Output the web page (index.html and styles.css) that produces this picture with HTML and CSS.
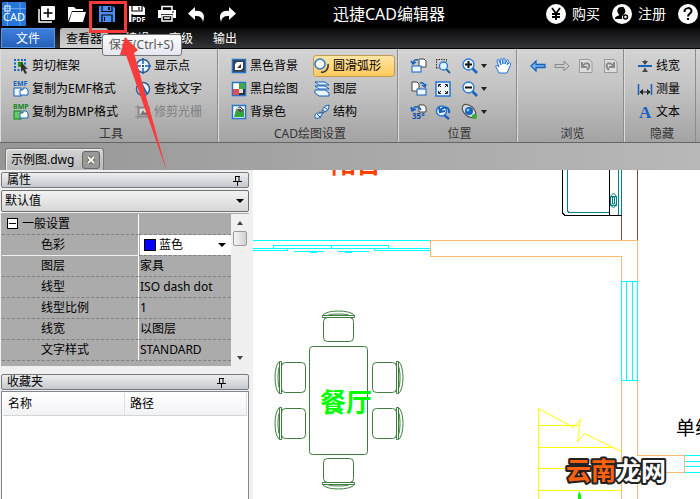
FILE: index.html
```
<!DOCTYPE html>
<html lang="zh-CN">
<head>
  <meta charset="UTF-8" />
  <meta name="viewport" content="width=device-width, initial-scale=1.0"/>
  <title>迅捷CAD编辑器</title>
  <link rel="stylesheet" href="styles.css">
</head>
<body>
  <header class="titlebar">
    <div class="quick">
      <svg class="logo" viewBox="0 0 24 24"><rect width="24" height="24" rx="1" fill="#2675d8"/><path d="M0 6.500H24M5.500 0V24M18 0V24" stroke="#69a5ed" fill="none"/><rect x="3" y="4" width="5" height="5" fill="none" stroke="#fff"/><text x="1" y="19" class="logo-text">CAD</text></svg>
      <button class="quick-btn" aria-label="新建"><svg viewBox="0 0 18 18"><path d="M1 4V17H14" fill="none" stroke="#fff" stroke-width="1.500"/><rect x="3" y="1" width="14" height="14" rx="1" fill="#fff"/><path d="M10 3.500V12.500M5.500 8H14.500" stroke="#000" stroke-width="1.500"/></svg></button>
      <button class="quick-btn" aria-label="打开"><svg viewBox="0 0 18 18"><path d="M0 16V2H6L8 4H15V6H4L1 14Z" fill="#fff"/><path d="M4 7H18L15 17H1Z" fill="#fff"/></svg></button>
      <button class="quick-btn" aria-label="保存"><svg viewBox="0 0 18 18"><path d="M1 1H15L17 3V17H1Z" fill="#4b8cf7"/><path d="M4 1V6.500H14V1M4 17V10H14V17" fill="none" stroke="#000" stroke-width="1.200"/><path d="M10 2H12V5H10ZM6 12H7V16H6Z" fill="#000"/></svg></button>
      <button class="quick-btn" aria-label="导出PDF"><svg viewBox="0 0 18 18"><path d="M1 1H15L17 3V17H1Z" fill="#fff"/><path d="M4 1V6H14V1M11 2V5M4 17V9" fill="none" stroke="#000" stroke-width="1.200"/><rect x="4" y="10" width="14" height="8" fill="#000"/><text x="4" y="17" class="pdf-text">PDF</text></svg></button>
      <button class="quick-btn" aria-label="打印"><svg viewBox="0 0 18 18"><path d="M4 5V1.500H14V5" fill="none" stroke="#fff" stroke-width="1.600"/><path d="M0 5H18V13H15V9H3V13H0Z" fill="#fff"/><path d="M4 10.500H14V16H4ZM6 13H12" fill="none" stroke="#fff" stroke-width="1.500"/><path d="M14 7H16" stroke="#000"/></svg></button>
      <button class="quick-btn" aria-label="撤销"><svg viewBox="0 0 18 18"><path d="M7 2V6C14 5 18 9 15 17C14 12 12 11 7 11V15L0 8.500Z" fill="#fff"/></svg></button>
      <button class="quick-btn" aria-label="重做"><svg viewBox="0 0 18 18"><path d="M11 2V6C4 5 0 9 3 17C4 12 6 11 11 11V15L18 8.500Z" fill="#fff"/></svg></button>
    </div>
    <h1 class="app-title">迅捷CAD编辑器</h1>
    <div class="account">
      <button class="account-btn"><svg viewBox="0 0 20 20"><circle cx="10" cy="10" r="10" fill="#fff"/><path d="M6 4L10 9.500L14 4M10 9V16M6 10H14M6 13H14" fill="none" stroke="#000" stroke-width="1.800"/></svg>购买</button>
      <button class="account-btn"><svg viewBox="0 0 20 20"><circle cx="10" cy="10" r="10" fill="#fff"/><path d="M9 3A3.500 4 0 0 1 12 10C12 11 11 11 10 12V15H3C3 12 6 12 7.500 11C4 8 5 3 9 3Z" fill="#000"/><circle cx="13.500" cy="13" r="2" fill="#fff" stroke="#000" stroke-width="1.400"/></svg>注册</button>
      <button class="account-btn" aria-label="帮助"><svg viewBox="0 0 20 20"><circle cx="10" cy="10" r="10" fill="#fff"/><path d="M6.500 8C6.500 3 13.500 3 13.500 7C13.500 9.500 10 9.500 10 12.500M10 14V16" fill="none" stroke="#000" stroke-width="2"/></svg></button>
    </div>
  </header>

  <nav class="tabs">
    <button class="tab tab-file">文件</button>
    <button class="tab tab-active">查看器</button>
    <button class="tab">编辑</button>
    <button class="tab">高级</button>
    <button class="tab">输出</button>
  </nav>

  <section class="ribbon">
    <div class="group">
      <div class="tools tools-wide">
        <button class="tool"><svg viewBox="0 0 16 16"><path d="M1 2H12M1 12H7M2 1V13M12 1V8" stroke="#1664c4" stroke-width="2" stroke-dasharray="2 1.500"/><rect x="5" y="4" width="5" height="5" fill="#159415"/><path d="M8 4L15 11H12L14 15L12 16L10 12L8 14Z" fill="#333"/></svg>剪切框架</button>
        <button class="tool"><svg viewBox="0 0 16 16"><circle cx="8" cy="8" r="6.500" fill="#eaf5ff" stroke="#315f91" stroke-width="1.500"/><path d="M8 0V6M8 10V16M0 8H6M10 8H16" stroke="#1762bd" stroke-width="1.500"/><circle cx="8" cy="8" r="1" fill="#111"/></svg>显示点</button>
        <button class="tool"><svg viewBox="0 0 16 16"><text x="0" y="5" class="mini blue">EMF</text><rect x="1" y="7" width="7" height="8" fill="#edf6ff" stroke="#1762bd"/><path d="M7 9H10V7H13L15 9V14H7Z" fill="#fff" stroke="#1762bd"/></svg>复制为EMF格式</button>
        <button class="tool"><svg viewBox="0 0 16 16"><circle cx="8" cy="8" r="6.500" fill="#eaf5ff" stroke="#315f91" stroke-width="1.500"/><path d="M6 2L12 13M6 2V9L9 12" fill="none" stroke="#1762bd" stroke-width="2"/></svg>查找文字</button>
        <button class="tool"><svg viewBox="0 0 16 16"><text x="0" y="5" class="mini green">BMP</text><rect x="1" y="7" width="7" height="8" fill="#65cb64" stroke="#148522"/><path d="M7 9H10V7H13L15 9V14H7Z" fill="#fff" stroke="#1762bd"/></svg>复制为BMP格式</button>
        <button class="tool" disabled><svg viewBox="0 0 16 16"><path d="M0 3H15M3 1V15M0 13H15" stroke="#888" fill="none"/><rect x="4" y="4" width="10" height="8" fill="#ddd" stroke="#777"/><path d="M5 11L8 6L10 9L12 7L13 11Z" fill="#777"/></svg>修剪光栅</button>
      </div>
      <div class="group-name">工具</div>
    </div>
    <div class="group">
      <div class="tools tools-draw">
        <button class="tool"><svg viewBox="0 0 16 16"><rect x="1.500" y="1.500" width="13" height="13" fill="#3a3f45" stroke="#2374cb" stroke-width="1.500"/><path d="M4 12V6L6 4H12V10L10 12Z" fill="#fff"/><path d="M6 10L10 6V10Z" fill="#333"/></svg>黑色背景</button>
        <button class="tool tool-on"><svg viewBox="0 0 16 16"><circle cx="6" cy="6" r="5" fill="#fff" stroke="#2675d8" stroke-width="1.500"/><path d="M14 6C15 11 11 15 7 14" fill="none" stroke="#333" stroke-width="1.500"/></svg>圆滑弧形</button>
        <button class="tool"><svg viewBox="0 0 16 16"><rect x="1.500" y="1.500" width="13" height="13" fill="#fff" stroke="#2374cb" stroke-width="1.500"/><path d="M8 2H14V8H8Z" fill="#42a845"/><path d="M2 8H8V14H2Z" fill="#e04d54"/><path d="M8 8H14V14H8Z" fill="#333"/><path d="M8 8H12V12H8Z" fill="#ddd"/></svg>黑白绘图</button>
        <button class="tool"><svg viewBox="0 0 16 16"><path d="M1 1H11L15 4H5ZM1 5H11L15 8H5ZM1 9H11L15 12V15H5L1 12Z" fill="#e9f5ff" stroke="#1762bd"/></svg>图层</button>
        <button class="tool"><svg viewBox="0 0 16 16"><rect x="1.500" y="1.500" width="13" height="13" fill="#fff" stroke="#2374cb" stroke-width="1.500"/><path d="M3 13L5 5L9 9L13 5V13Z" fill="#32a335"/><path d="M5 5L9 2L13 6L9 9Z" fill="#4c564e"/><path d="M6 5L9 4L11 6" stroke="#fff" fill="none"/></svg>背景色</button>
        <button class="tool"><svg viewBox="0 0 16 16"><path d="M1 14C0 6 7 11 8 8C9 5 9 2 15 1C15 10 9 6 8 10C7 13 5 15 1 14Z" fill="#dceeff" stroke="#1762bd"/><path d="M3 10L7 14M5 8L10 9M8 6L12 8M10 3L14 6" stroke="#315f91"/></svg>结构</button>
      </div>
      <div class="group-name">CAD绘图设置</div>
    </div>
    <div class="group">
      <div class="tools tools-view">
        <button class="tool" aria-label="左旋"><svg viewBox="0 0 16 16"><path d="M8 1H13L15 3V9H8Z" fill="#fff" stroke="#444"/><rect x="1" y="8" width="9" height="6" fill="#edf6ff" stroke="#1762bd"/><path d="M7 2C4 1 2 3 2 6M0 3L2 6L5 4" fill="none" stroke="#1762bd" stroke-width="1.500"/></svg></button>
        <button class="tool" aria-label="窗口缩放"><svg viewBox="0 0 16 16"><path d="M1 1.500H12M1.500 1V10M1 10H5M11.500 1V4" stroke="#333" stroke-dasharray="1.500 1"/><path d="M11 11L15 15" stroke="#315f91" stroke-width="2"/><circle cx="8.500" cy="8" r="4" fill="#dff3ff" stroke="#2675d8" stroke-width="1.300"/></svg></button>
        <button class="tool tool-menu" aria-label="放大"><svg viewBox="0 0 16 16"><path d="M10 10L15 15" stroke="#1762bd" stroke-width="2.500"/><circle cx="6.500" cy="6.500" r="5.500" fill="#edf8ff" stroke="#2675d8" stroke-width="1.300"/><path d="M3 6.500H10M6.500 3V10" stroke="#111" stroke-width="2"/></svg></button>
        <button class="tool" aria-label="平移"><svg viewBox="0 0 16 16"><path d="M4 15L1 9C0 7 2 7 4 9L2 3C2 1 4 1 4 3L6 7L5 2C5 0 7 0 7 2L8 6V1C8 0 10 0 10 1V6L12 2C13 1 14 2 13 4L12 7L14 5C16 4 16 6 15 8L12 15Z" fill="#fff" stroke="#2675d8"/></svg></button>
        <button class="tool" aria-label="右旋"><svg viewBox="0 0 16 16"><path d="M1 1H6L8 3V10H1Z" fill="#fff" stroke="#444"/><rect x="6" y="8" width="9" height="6" fill="#edf6ff" stroke="#1762bd"/><path d="M9 2C12 1 14 3 14 6M11 4L14 6L15 3" fill="none" stroke="#1762bd" stroke-width="1.500"/></svg></button>
        <button class="tool" aria-label="全图"><svg viewBox="0 0 16 16"><rect x="1" y="1" width="14" height="14" fill="#edf6ff" stroke="#2675d8" stroke-width="1.500"/><path d="M3.500 6V3.500H6M10 3.500H12.500V6M12.500 10V12.500H10M6 12.500H3.500V10M4 4L6 6M12 4L10 6M12 12L10 10M4 12L6 10" fill="none" stroke="#222"/></svg></button>
        <button class="tool tool-menu" aria-label="缩小"><svg viewBox="0 0 16 16"><path d="M10 10L15 15" stroke="#1762bd" stroke-width="2.500"/><circle cx="6.500" cy="6.500" r="5.500" fill="#edf8ff" stroke="#2675d8" stroke-width="1.300"/><path d="M3 6.500H10" stroke="#111" stroke-width="2"/></svg></button>
        <span></span>
        <button class="tool" aria-label="旋转角度"><svg viewBox="0 0 16 16"><path d="M8 1H13L15 3V8H8Z" fill="#fff" stroke="#444"/><path d="M1 7C2 2 8 1 10 6M0 3L1 7L5 5" fill="none" stroke="#1762bd" stroke-width="1.500"/><text x="1" y="15" class="angle">35°</text></svg></button>
        <button class="tool" aria-label="上次视图"><svg viewBox="0 0 16 16"><path d="M9 11L14 15" stroke="#1762bd" stroke-width="2.500"/><circle cx="6.500" cy="7" r="5" fill="#edf8ff" stroke="#2675d8" stroke-width="1.500"/><path d="M5 7C8 2 15 2 14 9M4 3L5 8L10 7" fill="none" stroke="#1762bd" stroke-width="2"/></svg></button>
        <button class="tool tool-menu" aria-label="三维视图"><svg viewBox="0 0 16 16"><ellipse cx="7" cy="7" rx="8" ry="5" transform="rotate(42 7 7)" fill="#ddd" stroke="#555" stroke-width="1.300"/><circle cx="7" cy="7" r="4" fill="#1762bd"/><circle cx="6" cy="6" r="1.500" fill="#7ec4ff"/><circle cx="12.500" cy="12.500" r="2.500" fill="#31ae35"/></svg></button>
      </div>
      <div class="group-name">位置</div>
    </div>
    <div class="group">
      <div class="tools tools-browse">
        <button class="tool" aria-label="后退"><svg viewBox="0 0 16 16"><path d="M1 8L6 3V6.500H15V9.500H6V13Z" fill="#7fb6f0" stroke="#1762bd" stroke-width="1.300"/></svg></button>
        <button class="tool" aria-label="前进" disabled><svg viewBox="0 0 16 16"><path d="M15 8L10 3V6.500H1V9.500H10V13Z" fill="#ccc" stroke="#888"/></svg></button>
        <button class="tool" aria-label="上一页" disabled><svg viewBox="0 0 16 16"><path d="M1.500 1.500H11L14 4V14.500H1.500Z" fill="#ddd" stroke="#999"/><path d="M4 4V9H9M4 9C8 2 15 6 9 12" fill="none" stroke="#888" stroke-width="2"/></svg></button>
        <button class="tool" aria-label="下一页" disabled><svg viewBox="0 0 16 16"><path d="M2.500 1.500H12L15 4V14.500H2.500Z" fill="#ddd" stroke="#999"/><path d="M12 4V9H7M12 9C8 2 1 6 7 12" fill="none" stroke="#888" stroke-width="2"/></svg></button>
      </div>
      <div class="group-name">浏览</div>
    </div>
    <div class="group">
      <div class="tools tools-hide">
        <button class="tool"><svg viewBox="0 0 16 16"><path d="M1 8H15" stroke="#1762bd" stroke-width="2"/><path d="M8 2V6M8 10V14" stroke="#333"/><path d="M5 3H11L8 7ZM5 14H11L8 10Z" fill="#444"/></svg>线宽</button>
        <button class="tool"><svg viewBox="0 0 16 16"><path d="M1.500 3V14M14.500 3V14" stroke="#1762bd" stroke-width="1.500"/><path d="M3 11H13" stroke="#222"/><path d="M2.500 11L6 8V14ZM13.500 11L10 8V14Z" fill="#222"/></svg>测量</button>
        <button class="tool"><svg viewBox="0 0 16 16"><text x="2" y="14" class="letter">A</text></svg>文本</button>
      </div>
      <div class="group-name">隐藏</div>
    </div>
  </section>

  <div class="documents">
    <div class="document">
      <span>示例图.dwg</span>
      <button class="close" aria-label="关闭"><svg viewBox="0 0 10 10"><path d="M2 2L8 8M8 2L2 8" stroke="#5c5438" stroke-width="3.500"/><path d="M2 2L8 8M8 2L2 8" stroke="#fff" stroke-width="2"/></svg></button>
    </div>
  </div>

  <main class="workspace">
    <aside class="side">
      <h2 class="panel-title">属性<svg class="pin" viewBox="0 0 9 11"><path d="M2.500 1V6.500M2 1.500H7M6 1V7M0 6.500H9M4.500 7V11" stroke="#000" fill="none"/></svg></h2>
      <div class="pick preset">
        <select aria-label="预设"><option>默认值</option></select>
      </div>
      <div class="props-box">
        <table class="props">
          <tr><th class="section-name"><span class="fold"></span>一般设置</th><td></td></tr>
          <tr class="current"><th><label for="color">色彩</label></th><td><div class="pick color-pick"><span class="swatch"></span><select id="color"><option>蓝色</option></select></div></td></tr>
          <tr><th>图层</th><td>家具</td></tr>
          <tr><th>线型</th><td>ISO dash dot</td></tr>
          <tr><th>线型比例</th><td>1</td></tr>
          <tr><th>线宽</th><td>以图层</td></tr>
          <tr><th>文字样式</th><td>STANDARD</td></tr>
        </table>
        <div class="scroll"><span class="scroll-up"></span><span class="thumb"></span><span class="scroll-down"></span></div>
      </div>
      <h2 class="panel-title favorites-title">收藏夹<svg class="pin" viewBox="0 0 9 11"><path d="M2.500 1V6.500M2 1.500H7M6 1V7M0 6.500H9M4.500 7V11" stroke="#000" fill="none"/></svg></h2>
      <div class="favorites">
        <table>
          <tr><th>名称</th><th>路径</th></tr>
        </table>
      </div>
    </aside>

    <div class="canvas">
      <svg class="drawing" viewBox="253 170 447 329" preserveAspectRatio="xMinYMin slice">
        <defs>
          <g id="chair" fill="none" stroke="#3f7d3f">
            <rect x="-15" y="-11" width="30" height="24" rx="4"/>
            <path d="M-16 -11V-13H16V-11ZM-16 -13C-12 -19 12 -19 16 -13M-11 -13C-8 -15 8 -15 11 -13"/>
          </g>
        </defs>
        <text x="331" y="173" class="room-top">阳台</text>
        <!-- window wall -->
        <g fill="none" stroke="#0ff" shape-rendering="crispEdges">
          <path d="M253 240.500H430M253 248.500H430M253 250.500H287.500V248.500M273.500 248.500V245.500H388.500V248.500M331.500 245.500V248.500M374.500 248.500V250.500H430M294 251.500H324M338 251.500H369M310 252.500H317M345 252.500H352"/>
          <path d="M621.500 281.500H637.500V380.500H621.500ZM626.500 281V380M632.500 281V380"/>
          <path d="M685 455.500H700M685 461.500H700M685 466.500H700M685 472.500H700"/>
        </g>
        <g fill="none" stroke="#ffb973" shape-rendering="crispEdges">
          <path d="M621.500 281V256.500H430.500V240.500H637.500V281M621.500 381V499M637.500 381V455.500H684.500V472.500H637.500V499"/>
        </g>
        <!-- balcony cabinet -->
        <g fill="none" shape-rendering="crispEdges">
          <path d="M621.500 215V240M637.500 170V240" stroke="#804a40"/>
          <path d="M567.500 170V211L569 212.500H609M618.500 170V215M621.500 170V215" stroke="#008080"/>
          <path d="M562.500 170V213L565 215.500H622M609.500 170V215" stroke="#000"/>
        </g>
        <g fill="none" stroke="#008080"><ellipse cx="613.500" cy="200.500" rx="3" ry="7"/><rect x="610.500" y="196.500" width="6" height="9"/><path d="M612.500 197V204H614.500V197Z"/></g>
        <!-- dining table -->
        <rect x="309.500" y="346.500" width="58" height="108" rx="3" fill="none" stroke="#3f7d3f"/>
        <use href="#chair" transform="translate(338.500 328.500)"/>
        <use href="#chair" transform="translate(338.500 471.500) rotate(180)"/>
        <use href="#chair" transform="translate(292.500 377.500) rotate(-90)"/>
        <use href="#chair" transform="translate(292.500 423.500) rotate(-90)"/>
        <use href="#chair" transform="translate(385.500 377.500) rotate(90)"/>
        <use href="#chair" transform="translate(385.500 423.500) rotate(90)"/>
        <text x="320" y="412" class="room">餐厅</text>
        <!-- stairs -->
        <path d="M538.500 499V408.500L573.500 427.500L580.500 419.500L577.500 441.500L584.500 433.500L621.500 451.500M538 425.500H578M538 447.500H612M538 468.500H621M538 490.500H621" fill="none" stroke="#ff0"/>
        <path d="M579 491L581 495V499H578V495Z" fill="#0f0"/>
        <text x="676" y="435" class="unit">单线</text>
        <text x="566" y="480" class="mark"><tspan class="mark-orange">云南</tspan><tspan>龙网</tspan></text>
      </svg>
    </div>
  </main>

  <div class="save-frame"></div>
  <div class="tooltip">保存(Ctrl+S)</div>
  <svg class="pointer" viewBox="0 0 50 136"><path d="M6 0L19 13L15 16L48 135L7 18L1 18Z" fill="#f93b3b"/></svg>
</body>
</html>
```

FILE: styles.css
```
* {
  box-sizing: border-box;
}
body {
  margin: 0;
  height: 100vh;
  display: flex;
  flex-direction: column;
  overflow: hidden;
  background: #f0f0f0;
  color: #000;
  font-family: "Noto Sans", "Noto Sans CJK SC", sans-serif;
  font-size: 12px;
  line-height: 16px;
}
button,
select {
  font: inherit;
  color: inherit;
  border: 0;
  padding: 0;
  margin: 0;
  background: none;
}
h1,
h2 {
  margin: 0;
  font-weight: normal;
}
svg {
  display: block;
  flex: none;
}
.titlebar {
  height: 28px;
  flex: none;
  display: grid;
  grid-template-columns: 1fr auto 1fr;
  align-items: center;
  background: #000;
  color: #fff;
}
.quick {
  display: flex;
  align-items: center;
  gap: 12px;
  padding-left: 2px;
}
.logo {
  width: 24px;
  height: 24px;
}
.logo-text {
  font-size: 11px;
  fill: #fff;
}
.quick-btn svg {
  width: 18px;
  height: 18px;
  overflow: visible;
}
.pdf-text {
  font-size: 7px;
  font-weight: bold;
  fill: #fff;
}
.app-title {
  padding-left: 78px;
  font-size: 16px;
  line-height: 24px;
  white-space: nowrap;
}
.account {
  display: flex;
  justify-content: flex-end;
  gap: 12px;
  padding-right: 2px;
  font-size: 14px;
}
.account-btn {
  display: flex;
  align-items: center;
  gap: 6px;
  white-space: nowrap;
}
.account-btn svg {
  width: 20px;
  height: 20px;
}
.tabs {
  height: 21px;
  flex: none;
  display: flex;
  padding-left: 1px;
  background: linear-gradient(#0a0a0a, #333436);
  border-bottom: 1px solid #000;
  color: #fff;
}
.tab {
  padding: 2px 9px 0;
  margin-right: 2px;
}
.tab-file {
  width: 54px;
  margin-right: 5px;
  background: linear-gradient(#3f7fdc, #2560b8);
  border: 1px solid #5a94e6;
}
.tab-active {
  padding: 2px 6px 0;
  margin-right: 8px;
  color: #000;
  background: linear-gradient(#b5b5b5, #d2d2d2);
  border-radius: 3px 3px 0 0;
}
.ribbon {
  flex: none;
  display: flex;
  height: 94px;
  background: linear-gradient(#d3d3d3, #c4c4c4 40%, #a3a3a3);
  border-bottom: 1px solid #666;
}
.group {
  display: flex;
  flex-direction: column;
  justify-content: space-between;
  padding: 5px 0 0 13px;
  border-right: 1px solid #8c8c8c;
  box-shadow: inset 1px 0 #dcdcdc;
}
.group-name {
  height: 19px;
  padding-right: 8px;
  line-height: 22px;
  text-align: center;
  color: #333;
}
.tools {
  display: grid;
  grid-auto-rows: 23px;
  align-items: center;
}
.tools-wide {
  grid-template-columns: 122px 82px;
}
.tools-draw {
  grid-template-columns: 83px 83px;
}
.tools-view {
  grid-template-columns: 24px 27px 33px 21px;
}
.tools-browse {
  grid-template-columns: repeat(3, 24px) 21px;
}
.tools-hide {
  grid-template-columns: 58px;
}
.tool {
  display: flex;
  align-items: center;
  gap: 3px;
  height: 20px;
  white-space: nowrap;
}
.tool:disabled {
  color: #808080;
}
.tool svg {
  width: 16px;
  height: 16px;
  overflow: visible;
}
.tool-on {
  margin-right: 3px;
  border-radius: 3px;
  background: linear-gradient(#ffe6a6, #ffc95c);
  box-shadow: 0 0 0 1px #c29b52;
}
.tool-menu::after,
.pick::after {
  content: "";
  border: 3px solid transparent;
  border-top: 4px solid #222;
  border-bottom: 0;
}
.mini {
  font-size: 7px;
  font-weight: bold;
}
.blue {
  fill: #1762bd;
}
.green {
  fill: #148522;
}
.angle {
  font-size: 8px;
  font-weight: bold;
  fill: #0b4eaa;
}
.letter {
  font-family: "Liberation Serif", serif;
  font-size: 17px;
  font-weight: bold;
  fill: #1762bd;
}
.documents {
  height: 27px;
  flex: none;
  padding: 5px 5px 0;
  background: linear-gradient(to right, #969696, #b8b8b8);
}
.document {
  display: inline-flex;
  align-items: center;
  gap: 8px;
  height: 22px;
  padding: 0 3px 0 5px;
  border: 1px solid #777;
  border-bottom: 0;
  border-radius: 3px 3px 0 0;
  background: linear-gradient(#d4d4d4, #b9b9b9);
  box-shadow: inset 1px 1px #eee;
}
.close {
  padding: 3px;
  border: 1px solid #666;
  border-radius: 3px;
  background: #999;
}
.close svg {
  width: 10px;
  height: 10px;
}
.workspace {
  flex: 1;
  min-height: 0;
  display: flex;
}
.side {
  width: 253px;
  flex: none;
  display: flex;
  flex-direction: column;
  padding: 2px 4px 0 1px;
}
.panel-title {
  display: flex;
  align-items: center;
  justify-content: space-between;
  height: 16px;
  flex: none;
  padding: 0 6px 0 5px;
  border: 1px solid #77797c;
  border-radius: 2px;
  background: linear-gradient(#eee, #c4c8ce);
  font-size: 12px;
  line-height: 14px;
}
.pin {
  width: 9px;
  height: 11px;
}
.pick {
  display: flex;
  align-items: center;
}
.pick select {
  flex: 1;
  min-width: 0;
  appearance: none;
}
.pick::after {
  border-width: 4px 4px 0;
  border-top-color: #000;
}
.preset {
  height: 22px;
  flex: none;
  margin: 2px 0 1px;
  padding: 0 4px 0 3px;
  border: 1px solid #707070;
  border-radius: 2px;
  background: linear-gradient(#f3f3f3, #d6d6d6);
}
.props-box {
  display: flex;
  flex: none;
  height: 153px;
  padding: 1px 0 0 1px;
  background: #ababab;
}
.props {
  flex: 1;
  align-self: flex-start;
  table-layout: fixed;
  border-collapse: separate;
  border-spacing: 0;
}
.props th,
.props td {
  height: 21px;
  padding: 0;
  font-weight: normal;
  text-align: left;
  border-bottom: 1px dashed #808080;
}
.props th {
  width: 137px;
  padding-left: 39px;
  border-right: 1px solid #fff;
}
.props td {
  padding-left: 1px;
}
.props .section-name {
  padding-left: 5px;
}
.fold {
  display: inline-block;
  width: 11px;
  height: 11px;
  margin-right: 4px;
  vertical-align: -1px;
  border: 1px solid #000;
  background: linear-gradient(#000, #000) center / 7px 1px no-repeat #fff;
}
.current th {
  border-bottom: 1px solid #eee;
}
.color-pick {
  height: 20px;
  gap: 3px;
  padding: 0 5px 0 4px;
  background: #fff;
}
.swatch {
  width: 12px;
  height: 12px;
  border: 1px solid #000;
  background: #00f;
}
.scroll {
  display: flex;
  flex-direction: column;
  align-items: center;
  width: 18px;
  padding: 7px 0 6px;
  background: #f0f0f0;
}
.scroll-up {
  border: 3px solid transparent;
  border-top: 0;
  border-bottom: 4px solid #444;
}
.scroll-down {
  margin-top: auto;
  border: 3px solid transparent;
  border-bottom: 0;
  border-top: 4px solid #444;
}
.thumb {
  width: 14px;
  height: 15px;
  margin-top: 6px;
  border: 1px solid #999;
  border-radius: 2px;
  background: linear-gradient(to right, #f5f5f5, #d0d0d0);
}
.favorites-title {
  margin-top: 8px;
  padding-right: 22px;
}
.favorites {
  flex: 1;
  margin-top: 1px;
  padding: 1px;
  border: 1px solid #82868f;
  border-bottom: 0;
  background: #fff;
}
.favorites table {
  width: 100%;
  table-layout: fixed;
  border-spacing: 0;
}
.favorites th {
  height: 23px;
  padding: 0 5px;
  font-weight: normal;
  text-align: left;
  background: linear-gradient(#fff, #f1f2f4);
  border-right: 1px solid #dedfe1;
  border-bottom: 1px solid #d5d5d5;
}
.canvas {
  flex: 1;
  min-width: 0;
  background: #fff;
}
.drawing {
  width: 100%;
  height: 100%;
}
.room-top {
  font-size: 25px;
  font-weight: bold;
  fill: #ff4000;
}
.room {
  font-size: 26px;
  font-weight: bold;
  fill: #0f0;
}
.unit {
  font-size: 19px;
}
.mark {
  font-size: 25px;
  font-weight: bold;
  fill: #fff;
  stroke: #222;
  stroke-width: 4px;
  stroke-linejoin: round;
  paint-order: stroke;
}
.mark-orange {
  fill: #ff6010;
}
/* callout laid over the toolbar */
.save-frame {
  position: absolute;
  left: 89px;
  top: 1px;
  width: 38px;
  height: 32px;
  border: 3px solid #f93b3b;
}
.tooltip {
  position: absolute;
  left: 102px;
  top: 34px;
  padding: 2px 7px 2px 6px;
  border: 1px solid #767676;
  border-radius: 3px;
  background: linear-gradient(#fff, #e4e5f0);
  color: #575757;
}
.pointer {
  position: absolute;
  left: 119px;
  top: 37px;
  width: 50px;
  height: 136px;
}
```
